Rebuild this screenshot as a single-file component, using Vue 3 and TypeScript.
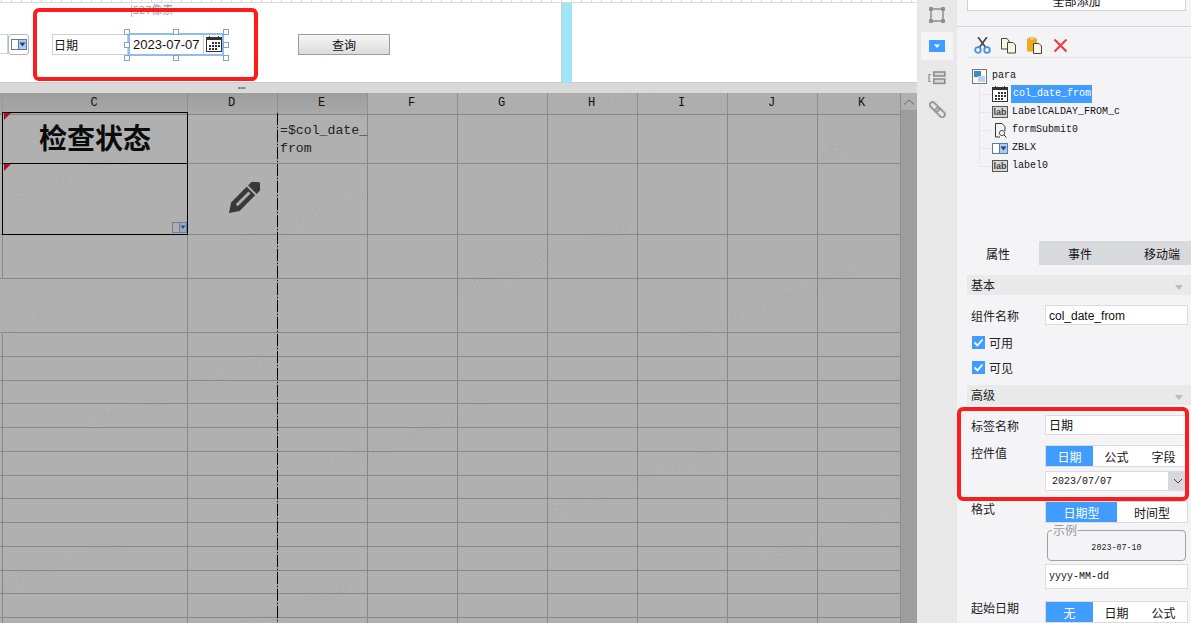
<script setup lang="ts">
const colNames = ['C', 'D', 'E', 'F', 'G', 'H', 'I', 'J', 'K']
const rowHeights = [51, 71, 44, 54, 24, 24, 23, 24, 24, 24, 23, 24, 24, 24, 23, 24, 24, 24]
const marks: { left: number; top: number }[] = []
for (let i = -2; i < 6; i++) {
  for (let j = -2; j < 4; j++) {
    const left = 12 + 224 * i + 84 * j
    const top = 207 + 46 * i + 226 * j - 93
    if (left > -150 && left < 890 && top > 20 && top < 640) marks.push({ left, top })
  }
}
const handles = [
  [124, 29], [173, 29], [223, 29],
  [124, 42], [223, 42],
  [124, 55], [173, 55], [223, 55]
]
</script>

<template>
  <div class="app">
    <svg class="defs" width="0" height="0">
      <symbol id="cal" viewBox="0 0 16 16">
        <rect x="0.5" y="1.5" width="15" height="14" fill="#fff" stroke="#333" />
        <rect x="1" y="2" width="14" height="2" fill="#333" />
        <rect x="3" y="0" width="1" height="3" fill="#333" />
        <rect x="12" y="0" width="1" height="3" fill="#333" />
        <g fill="#333">
          <rect x="6" y="6" width="2" height="2" /><rect x="9" y="6" width="2" height="2" /><rect x="12" y="6" width="2" height="2" />
          <rect x="3" y="9" width="2" height="2" /><rect x="6" y="9" width="2" height="2" /><rect x="9" y="9" width="2" height="2" /><rect x="12" y="9" width="2" height="2" />
          <rect x="3" y="12" width="2" height="2" /><rect x="6" y="12" width="2" height="2" /><rect x="9" y="12" width="2" height="2" />
        </g>
      </symbol>
      <symbol id="combo" viewBox="0 0 16 11">
        <rect x="0.5" y="0.5" width="15" height="10" fill="#fff" stroke="#5a78a8" />
        <rect x="7" y="1" width="8" height="9" fill="#aecbee" />
        <rect x="7" y="1" width="1" height="9" fill="#5a78a8" />
        <path d="M8.5 3.5h6l-3 4z" fill="#27407a" />
      </symbol>
    </svg>

    <div class="left">
      <div class="canvas">
        <span class="ruler-text">|527像素</span>
        <div class="stub-input"></div>
        <div class="stub-btn"><svg width="16" height="11"><use href="#combo" /></svg></div>
        <div class="label-box">日期</div>
        <div class="date-box">
          <span class="date-val">2023-07-07</span>
          <span class="date-btn"><svg width="16" height="16"><use href="#cal" /></svg></span>
        </div>
        <i v-for="(h, n) in handles" :key="n" class="handle" :style="{ left: h[0] + 'px', top: h[1] + 'px' }"></i>
        <button class="query">查询</button>
        <div class="cyan"></div>
        <div class="red red-a"></div>
      </div>
      <div class="splitter"><span>•••</span></div>
      <div class="sheet">
        <div class="grid">
          <div class="head line">
            <div class="hc dark"></div>
            <div v-for="(c, i) in colNames" :key="c" class="hc" :class="{ dark: i < 3 }">{{ c }}</div>
          </div>
          <div v-for="(h, r) in rowHeights" :key="r" class="line" :style="{ height: h + 'px' }">
            <div class="cell stub" :class="{ ruled: r !== 3 }"></div>
            <div v-for="(c, i) in colNames" :key="c" class="cell" :class="{ boxed: i === 0 && r < 2 }">
              <i v-if="i === 0 && r < 2" class="corner"></i>
              <span v-if="i === 0 && r === 0" class="title">检查状态</span>
              <svg v-if="i === 0 && r === 1" class="cell-combo" width="15" height="11" viewBox="0 0 15 11">
                <rect x="0.5" y="0.5" width="14" height="10" fill="#b0b0b0" stroke="#6f7f9f" />
                <rect x="7" y="1" width="7" height="9" fill="#9aa8c0" />
                <rect x="7" y="1" width="1" height="9" fill="#6f7f9f" />
                <path d="M8.5 3.5h5l-2.5 3.5z" fill="#3a4a78" />
              </svg>
              <span v-if="i === 2 && r === 0" class="formula">=$col_date_<br />from</span>
              <svg v-if="i === 1 && r === 1" class="pencil" width="32" height="32" viewBox="0 0 32 32">
                <g transform="translate(1 31) rotate(-45)" fill="#383838">
                  <path d="M0 0 L9 -6 H31 V6 H9 Z" />
                  <path d="M33 -6 H37 A6 6 0 0 1 37 6 H33 Z" />
                  <rect x="11" y="-1.5" width="18" height="3" fill="#adadad" />
                </g>
              </svg>
            </div>
          </div>
          <div class="dashed"></div>
          <span v-for="(m, k) in marks" :key="k" class="mark" :style="{ left: m.left + 'px', top: m.top + 'px' }">=$fine_username + now()</span>
        </div>
        <div class="scroll">
          <div class="scroll-btn"><svg width="12" height="8" viewBox="0 0 12 8"><path d="M1 6.5 6 2l5 4.5" fill="none" stroke="#666" /></svg></div>
        </div>
      </div>
    </div>

    <div class="rail">
      <div class="rail-item i1">
        <svg width="18" height="18" viewBox="0 0 18 18" fill="#8e8e8e">
          <path d="M3 3h12v12H3z" fill="none" stroke="#8e8e8e" stroke-width="1.5" />
          <rect x="1" y="1" width="4" height="4" rx="1" /><rect x="13" y="1" width="4" height="4" rx="1" />
          <rect x="1" y="13" width="4" height="4" rx="1" /><rect x="13" y="13" width="4" height="4" rx="1" />
        </svg>
      </div>
      <div class="rail-item active">
        <svg width="16" height="12" viewBox="0 0 16 12">
          <rect width="16" height="12" fill="#409cff" />
          <path d="M5 4.5h6l-3 3.5z" fill="#fff" />
        </svg>
      </div>
      <div class="rail-item i3">
        <svg width="18" height="14" viewBox="0 0 18 14" fill="none" stroke="#8e8e8e" stroke-width="1.6">
          <rect x="5.8" y="1" width="11" height="4" fill="#d6d6d6" />
          <rect x="5.8" y="8" width="11" height="4.4" fill="#d6d6d6" />
          <path d="M3 3.5H1v7h2" stroke-width="1.2" />
        </svg>
      </div>
      <div class="rail-item i4">
        <svg width="17" height="17" viewBox="0 0 17 17" fill="none" stroke="#9a9a9a" stroke-width="2">
          <g transform="rotate(45 8.5 8.5)">
            <rect x="-1" y="6" width="11" height="5.4" rx="2.7" />
            <rect x="7" y="6" width="11" height="5.4" rx="2.7" />
          </g>
        </svg>
      </div>
    </div>

    <div class="panel">
      <div class="add"><span>全部添加</span></div>
      <div class="rule"></div>
      <div class="tools">
        <svg width="17" height="17" viewBox="0 0 17 17">
          <path d="M5 11 13 0M12 11 4 0" stroke="#444" stroke-width="1.6" fill="none" />
          <circle cx="4" cy="13" r="2.8" fill="none" stroke="#3f92e6" stroke-width="1.8" />
          <circle cx="13" cy="13" r="2.8" fill="none" stroke="#3f92e6" stroke-width="1.8" />
        </svg>
        <svg width="17" height="17" viewBox="0 0 17 17" stroke="#444" fill="#fbf6df">
          <path d="M1.5 1.5H7l2 2.5v8H1.5z" /><path d="M7.5 5.5H13l2.5 2.5v8h-8z" />
        </svg>
        <svg width="17" height="17" viewBox="0 0 17 17">
          <rect x="1" y="1.5" width="10" height="13" fill="#f0a81c" />
          <rect x="3.5" y="0" width="5" height="3" fill="#f7d27a" stroke="#c88a10" stroke-width=".5" />
          <path d="M7.5 6.5H13l2.5 2.5v7.5h-8z" fill="#fbf6df" stroke="#444" />
        </svg>
        <svg width="15" height="15" viewBox="0 0 15 15"><path d="M1.5 1.5l12 12M13.5 1.5l-12 12" stroke="#e8403c" stroke-width="2.2" /></svg>
      </div>
      <div class="tree">
        <div class="tree-line"></div>
        <div class="root">
          <svg width="15" height="15" viewBox="0 0 15 15">
            <rect x=".5" y=".5" width="14" height="14" fill="#fff" stroke="#777" />
            <rect x="2" y="2" width="7" height="6" fill="#3a8fc8" />
            <rect x="6" y="7" width="7" height="6" fill="#b9d2f0" />
          </svg>
          <span class="t">para</span>
        </div>
        <div class="node">
          <svg width="16" height="16"><use href="#cal" /></svg>
          <span class="t sel">col_date_from</span>
        </div>
        <div class="node"><span class="lab">lab</span><span class="t">LabelCALDAY_FROM_c</span></div>
        <div class="node">
          <svg width="16" height="16" viewBox="0 0 16 16" fill="none" stroke="#333">
            <path d="M8 15H3.5V1.5H10l3 3V9" /><circle cx="10" cy="11" r="2.6" stroke="#555" /><path d="M12 13l2.5 2.5" />
          </svg>
          <span class="t">formSubmit0</span>
        </div>
        <div class="node"><svg width="16" height="11"><use href="#combo" /></svg><span class="t">ZBLX</span></div>
        <div class="node"><span class="lab">lab</span><span class="t">label0</span></div>
      </div>

      <div class="tabs">
        <div class="tab on">属性</div>
        <div class="tab">事件</div>
        <div class="tab">移动端</div>
      </div>

      <div class="props">
        <div class="bar">基本<i class="tri"></i></div>
        <div class="row r1"><label>组件名称</label><div class="input sans">col_date_from</div></div>
        <div class="check c1"><span class="box"><svg width="13" height="13" viewBox="0 0 13 13"><path d="M2.5 6.5l3 3 5-6" fill="none" stroke="#fff" stroke-width="1.8" /></svg></span>可用</div>
        <div class="check c2"><span class="box"><svg width="13" height="13" viewBox="0 0 13 13"><path d="M2.5 6.5l3 3 5-6" fill="none" stroke="#fff" stroke-width="1.8" /></svg></span>可见</div>
        <div class="bar b2">高级<i class="tri"></i></div>
        <div class="row r2"><label>标签名称</label><div class="input sans">日期</div></div>
        <div class="row r3">
          <label class="lo">控件值</label>
          <div class="seg s3"><span class="on">日期</span><span>公式</span><span>字段</span></div>
        </div>
        <div class="row r4">
          <label></label>
          <div class="input combo"><span class="mono">2023/07/07</span>
            <span class="drop"><svg width="10" height="6" viewBox="0 0 10 6"><path d="M1 1l4 4 4-4" fill="none" stroke="#444" /></svg></span>
          </div>
        </div>
        <div class="row r5">
          <label class="lo">格式</label>
          <div class="seg s2"><span class="on">日期型</span><span>时间型</span></div>
        </div>
        <div class="row r6">
          <label></label>
          <div class="sample"><span class="legend">示例</span><span class="sample-val">2023-07-10</span></div>
        </div>
        <div class="row r7"><label></label><div class="input tall mono">yyyy-MM-dd</div></div>
        <div class="row r8">
          <label class="lo">起始日期</label>
          <div class="seg s3"><span class="on">无</span><span>日期</span><span>公式</span></div>
        </div>
      </div>
      <div class="red red-b"></div>
    </div>
  </div>
</template>

<style>
html, body { margin: 0; height: 100%; overflow: hidden; }
</style>

<style scoped>
.app {
  display: flex;
  width: 1191px;
  height: 623px;
  overflow: hidden;
  font-family: "Noto Sans CJK SC", "Liberation Sans", sans-serif;
  font-size: 12px;
  color: #222;
  position: relative;
  background: #f4f4f7;
}
.defs { position: absolute; }
.left { width: 917px; flex: none; display: flex; flex-direction: column; }

.canvas {
  position: relative;
  height: 83px;
  flex: none;
  box-sizing: border-box;
  background:
    repeating-linear-gradient(90deg, #d9d9d9 0 1px, transparent 1px 10px) 1px 0 / 100% 3px no-repeat,
    #fff;
  border-bottom: 1px solid #ccc;
}
.canvas::before {
  content: "";
  position: absolute;
  left: 0; right: 0; top: 2px;
  height: 1px;
  background: #d9d9d9;
}
.ruler-text { position: absolute; left: 130px; top: 0; font-size: 11px; line-height: 18px; color: #8ba3c0; }
.stub-input { position: absolute; left: 0; top: 34px; width: 8px; height: 20px; box-sizing: border-box; border: 1px solid #d0d0d0; border-left: 0; }
.stub-btn {
  position: absolute; left: 8px; top: 34px; width: 21px; height: 21px; box-sizing: border-box;
  border: 1px solid #b5b5b5; border-radius: 3px; display: flex; align-items: center; justify-content: center; background: #fff;
}
.label-box {
  position: absolute; left: 52px; top: 34px; width: 76px; height: 21px; box-sizing: border-box;
  border: 1px solid #cfcfcf; padding-left: 1px; line-height: 20px; font-size: 12px; color: #111;
}
.date-box {
  position: absolute; left: 128px; top: 33px; width: 96px; height: 23px; box-sizing: border-box;
  border: 2px solid #8fbdf1; background: #fff; display: flex;
}
.date-val { font-family: "Liberation Sans", sans-serif; font-size: 13px; line-height: 19px; padding-left: 3px; width: 70px; color: #111; }
.date-btn { border-left: 1px solid #ccc; padding: 1px 0 0 2px; }
.date-btn svg { display: block; }
.handle {
  position: absolute; width: 6px; height: 6px; box-sizing: border-box;
  border: 1px solid #7ca6cb; background: #fff;
}
.query {
  position: absolute; left: 298px; top: 34px; width: 92px; height: 21px; padding: 0;
  border: 1px solid #9c9c9c; background: linear-gradient(#f6f6f6, #dcdcdc);
  font: 12px "Noto Sans CJK SC", sans-serif; color: #111;
}
.cyan { position: absolute; left: 561px; top: 3px; bottom: -1px; width: 11px; background: #9ee6f5; border-left: 1px solid #ccc; box-sizing: border-box; }
.red { position: absolute; box-sizing: border-box; border: 4px solid #fd1c1c; border-radius: 6px; pointer-events: none; z-index: 5; }
.red-a { left: 33px; top: 8px; width: 225px; height: 73px; }
.red-b { left: 0; top: 407px; width: 232px; height: 94px; }

.splitter { height: 10px; flex: none; background: #d9d9da; position: relative; }
.splitter span { position: absolute; left: 238px; top: 1px; font: 7px/8px "Liberation Sans", sans-serif; color: #666; }

.sheet { flex: 1; display: flex; min-height: 0; overflow: hidden; }
.grid { width: 900px; flex: none; position: relative; overflow: hidden; background: #b0b0b0; }
.line { display: grid; grid-template-columns: 3px 185px repeat(9, 90px); }
.head { height: 20px; }
.hc {
  box-sizing: border-box; border-right: 1px solid #8f8f8f; border-bottom: 1px solid #888;
  background: #aeaeae; text-align: center; font: 12px/21px "Liberation Mono", monospace; color: #111;
  padding-right: 2px;
}
.hc.dark { background: linear-gradient(#9e9e9e, #a8a8a8); }
.hc:first-child { border-right: 1px solid #999; padding: 0; }
.cell { box-sizing: border-box; border-right: 1px solid #888; border-bottom: 1px solid #888; position: relative; }
.cell.stub { border-right-color: transparent; }
.cell.stub.ruled { border-right-color: #888; }
.boxed::after {
  content: ""; position: absolute; left: -1px; top: -1px; right: -1px; bottom: -1px;
  border: 1px solid #000; z-index: 2;
}
.corner {
  position: absolute; left: 1px; top: 0; width: 0; height: 0; z-index: 3;
  border-top: 7px solid #b0102e; border-right: 7px solid transparent;
}
.title {
  position: absolute; left: 0; right: 0; top: 0; bottom: 0; display: flex; align-items: center; justify-content: center;
  font-size: 28px; font-weight: 700; color: #0a0a0a; padding-bottom: 2px;
}
.cell-combo { position: absolute; right: 0; bottom: 1px; }
.formula {
  position: absolute; left: 2px; top: 9px; font: 13.2px/18px "Liberation Mono", monospace; color: #222; white-space: nowrap; z-index: 1;
}
.pencil { position: absolute; left: 40px; top: 18px; }
.dashed {
  position: absolute; left: 277px; top: 20px; bottom: 0; width: 1px; z-index: 3;
  background: repeating-linear-gradient(#000 0 12px, #888 12px 14px, #000 14px 15px, #888 15px 17px);
}
.mark {
  position: absolute; transform: rotate(-20.5deg); transform-origin: 0 100%;
  font: 16px/18px "Liberation Sans", sans-serif; color: rgba(0, 0, 0, .035); white-space: nowrap; margin-top: -18px;
  pointer-events: none;
}

.scroll { width: 17px; flex: none; box-sizing: border-box; border-left: 1px solid #8d8d8d; background: #9d9d9d; }
.scroll-btn { height: 17px; background: #b0b0b0; display: flex; align-items: center; justify-content: center; }

.rail { width: 40px; flex: none; background: #e8e8e8; display: flex; flex-direction: column; align-items: center; }
.rail-item { width: 32px; height: 28px; flex: none; display: flex; align-items: center; justify-content: center; }
.i1 { margin-top: 1px; margin-bottom: 3px; }
.i3 { margin-top: 4px; }
.i4 { margin-top: 3px; }
.rail-item.active { background: #f4f4f7; }

.panel { flex: 1; min-width: 0; position: relative; overflow: hidden; display: flex; flex-direction: column; }
.add {
  height: 11px; flex: none; margin: 0 5px 0 10px; background: #fff; border: 1px solid #d2d2d2; border-top: 0;
  box-sizing: border-box; overflow: hidden; text-align: center;
}
.add span { display: block; line-height: 12px; margin-top: -5px; font-size: 12px; color: #111; }
.rule { height: 1px; background: #d6d6cf; margin-top: 15px; flex: none; }
.tools {
  height: 31px; flex: none; margin-left: 10px; box-sizing: border-box; border-bottom: 1px solid #e3e3e8;
  display: flex; align-items: center; gap: 9px; padding: 7px 0 0 7px;
}
.tools svg { flex: none; }
.tools svg:last-child { margin-left: 1px; }
.tree { height: 183px; flex: none; position: relative; padding: 9px 0 0 15px; box-sizing: border-box; }
.tree-line {
  position: absolute; left: 22px; top: 25px; height: 81px; width: 1px; background: #e6e6e6;
}
.root, .node { height: 18px; display: flex; align-items: center; position: relative; }
.root svg { margin-right: 5px; }
.node { margin-left: 20px; gap: 4px; }
.node svg, .lab { flex: none; }
.node::before { content: ""; position: absolute; left: -13px; top: 9px; width: 12px; height: 1px; background: #e6e6e6; }
.t { font: 10px/18px "Liberation Mono", monospace; color: #111; }
.sel { background: #409cff; color: #fff; margin-left: -1px; padding: 0 1px 0 2px; }
.lab {
  width: 16px; height: 12px; box-sizing: border-box; border: 1px solid #555; background: #d8d8d8; color: #444;
  font: 700 9px/10px "Liberation Sans", sans-serif; text-align: center;
}

.tabs { height: 24px; flex: none; display: flex; background: #d8d9dc; }
.tab { width: 82px; flex: none; text-align: center; line-height: 26px; color: #111; }
.tab.on { background: #f4f4f7; }

.props { padding: 10px 0 0 10px; }
.bar { height: 20px; background: #e9e9ea; line-height: 20px; padding-left: 4px; position: relative; color: #222; }
.tri { position: absolute; right: 8px; top: 10px; border: 4px solid transparent; border-top: 5px solid #bcbcbc; border-bottom: 0; }
.row { display: flex; }
.row label { width: 78px; height: 14px; flex: none; padding-left: 4px; box-sizing: border-box; line-height: 22px; color: #222; }
.row label.lo { line-height: 16px; }
.r8 label.lo { line-height: 14px; }
.input {
  width: 143px; height: 20px; box-sizing: border-box; background: #fff; border: 1px solid #dcdcdf; line-height: 20px; padding-left: 3px;
  color: #111;
}
.sans { font-family: "Liberation Sans", "Noto Sans CJK SC", sans-serif; font-size: 12px; }
.mono { font-family: "Liberation Mono", monospace; font-size: 10px; }
.r1 { margin-top: 10px; }
.check { display: flex; align-items: flex-start; margin-left: 5px; height: 14px; line-height: 13px; color: #222; }
.c1 { margin-top: 11px; }
.c2 { margin-top: 11px; }
.box { width: 13px; height: 13px; background: #409cff; margin-right: 4px; display: block; }
.box svg { display: block; }
.b2 { margin-top: 10px; }
.r2 { margin-top: 10px; }
.r3 { margin-top: 10px; }
.seg { width: 143px; height: 22px; box-sizing: border-box; background: #fff; border: 1px solid #dcdcdf; display: flex; line-height: 21px; color: #111; }
.seg span { flex: 1; text-align: center; }
.seg .on { background: #409cff; color: #fff; }
.s3 .on { flex: 0 0 47px; }
.s2 .on { flex: 0 0 71px; }
.r4 { margin-top: 4px; }
.combo { display: flex; padding-left: 6px; justify-content: space-between; line-height: 19px; }
.drop { width: 19px; background: #d8d8dc; display: flex; align-items: center; justify-content: center; }
.r5 { margin-top: 10px; }
.r6 { margin-top: 7px; }
.sample {
  width: 139px; height: 31px; margin-left: 2px; box-sizing: border-box; border: 1px solid #a0a0a0; border-radius: 4px;
  position: relative; text-align: center;
}
.legend { position: absolute; left: 4px; top: -8px; padding: 0 1px; line-height: 14px; background: #f4f4f7; color: #999; }
.sample-val { font: 8.4px/35px "Liberation Mono", monospace; color: #222; }
.r7 { margin-top: 3px; }
.tall { height: 25px; line-height: 23px; }
.r8 { margin-top: 12px; }
</style>
